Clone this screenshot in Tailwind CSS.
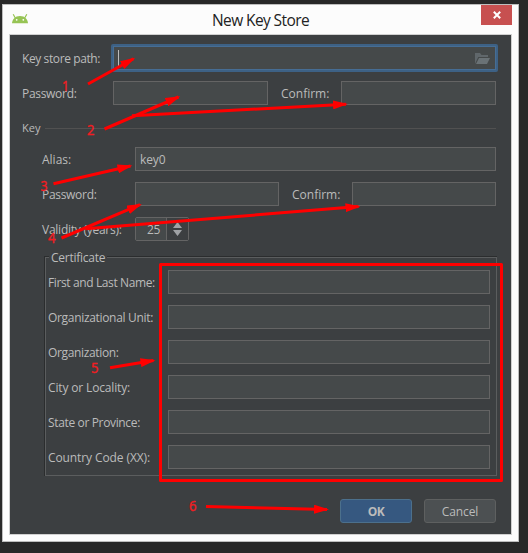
<!DOCTYPE html>
<html lang="en">
<head>
<meta charset="utf-8">
<title>New Key Store</title>
<script src="https://cdn.jsdelivr.net/npm/@tailwindcss/browser@4"></script>
</head>
<body class="h-[553px] w-[528px] overflow-hidden bg-[#282828] pl-[2px] pt-[4px] font-['Open_Sans','Noto_Sans',sans-serif] text-[12px] leading-4 text-[#bbbbbb]">
<div class="relative flex h-[538px] w-[517px] flex-col border border-[#bdbdbd] bg-[#fcfcfc] px-[6px] pb-[6px]">
  <header class="relative flex h-[29px] shrink-0 items-center justify-center text-[15.5px] text-[#222222]">
    <svg class="absolute left-[3px] top-[9px]" width="16" height="10" viewBox="0 0 16 10"><path d="M0 9.200C.3 5.300 3 2 8 2s7.700 3.300 8 7.200z" fill="#97c455"/><path d="M1.200.3 3.300 4M14.800.3 12.700 4" stroke="#97c455" stroke-width="1.200"/><circle cx="4.700" cy="5.800" r=".9" fill="#fff"/><circle cx="11.300" cy="5.800" r=".9" fill="#fff"/></svg>
    <h1 class="whitespace-nowrap tracking-[-0.6px]">New Key Store</h1>
    <button class="absolute right-0 top-0 flex h-5 w-[31px] items-center justify-center bg-[#c75050]"><svg width="8" height="8" viewBox="0 0 8 8"><path d="M.8.8 7.200 7.200M7.200.8.8 7.200" stroke="#fff" stroke-width="2"/></svg></button>
  </header>
  <main class="flex grow flex-col border border-[#d0d0d0] bg-[#3c3f41] pl-3 pr-[15px] pt-[9px]">
    <div class="flex h-7 items-center">
      <label class="w-[89px] whitespace-nowrap pt-0.5 tracking-[-0.4px]">Key store path:</label>
      <div class="-mr-[2px] flex h-7 grow items-center justify-between rounded-[2px] border-2 border-[#3d6185]">
        <div class="flex h-6 grow items-center justify-between border border-[#466d94] bg-[#45494a] pl-1 pr-[5px]">
          <span class="h-4 w-px bg-[#bbbbbb]"></span>
          <svg width="15" height="11" viewBox="0 0 15 11"><path d="M0 11V0h5l1.500 2H13v2H3.200z" fill="#60676b"/><path d="M4 5h11l-3 6H1z" fill="#6a7276"/></svg>
        </div>
      </div>
    </div>
    <div class="mt-[9px] flex h-6 items-center">
      <label class="w-[91px] pt-0.5 tracking-[-0.3px]">Password:</label>
      <div class="h-6 w-[155px] border border-[#646464] bg-[#45494a]"></div>
      <label class="w-[73px] pl-[13px] pt-0.5">Confirm:</label>
      <div class="h-6 w-[155px] border border-[#646464] bg-[#45494a]"></div>
    </div>
    <div class="mt-[15px] flex h-4 items-center text-[11px]"><span class="w-[23px]">Key</span><span class="h-px grow bg-[#515151]"></span></div>
    <div class="mt-[11px] flex h-6 items-center pl-5">
      <label class="w-[93px] pt-0.5">Alias:</label>
      <div class="flex h-6 w-[361px] items-center border border-[#646464] bg-[#45494a] pl-1 pt-0.5 tracking-[-0.1px]">key0</div>
    </div>
    <div class="mt-[11px] flex h-6 items-center pl-5">
      <label class="w-[93px] pt-0.5 tracking-[-0.3px]">Password:</label>
      <div class="h-6 w-[144px] border border-[#646464] bg-[#45494a]"></div>
      <label class="w-[73px] pl-[13px] pt-0.5">Confirm:</label>
      <div class="h-6 w-[144px] border border-[#646464] bg-[#45494a]"></div>
    </div>
    <div class="mt-[11px] flex h-6 items-center pl-5">
      <label class="w-[93px] whitespace-nowrap pt-0.5 tracking-[-0.25px]">Validity (years):</label>
      <div class="flex h-6 w-[54px] rounded-[2px] border border-[#646464] bg-[#45494a]">
        <span class="flex w-[31px] items-center justify-end border-r border-[#646464] bg-[#45494a] pr-[6px] pt-0.5 tracking-[-0.3px]">25</span>
        <span class="flex grow items-center justify-center bg-[#3c3f41]"><svg width="9" height="14" viewBox="0 0 9 14"><path d="M0 6 4.500 0 9 6zM0 8h9l-4.500 6z" fill="#9fa2a5"/></svg></span>
      </div>
    </div>
    <section class="relative ml-[22px] mt-[15px] h-[220px] w-[453px] border border-[#2b2d2e]">
      <div class="h-[219px] w-[452px] border border-[#5b5d5e] pl-[2px] pt-3">
        <h2 class="absolute left-[4px] top-[-7px] w-[58px] bg-[#3c3f41] pl-[2px] tracking-[-0.25px]">Certificate</h2>
        <div class="flex flex-col gap-[11px] whitespace-nowrap">
          <div class="flex h-6 items-center"><label class="w-[120px] pt-0.5 tracking-[-0.38px]">First and Last Name:</label><div class="h-6 w-[322px] border border-[#646464] bg-[#45494a]"></div></div>
          <div class="flex h-6 items-center"><label class="w-[120px] pt-0.5 tracking-[-0.32px]">Organizational Unit:</label><div class="h-6 w-[322px] border border-[#646464] bg-[#45494a]"></div></div>
          <div class="flex h-6 items-center"><label class="w-[120px] pt-0.5 tracking-[-0.35px]">Organization:</label><div class="h-6 w-[322px] border border-[#646464] bg-[#45494a]"></div></div>
          <div class="flex h-6 items-center"><label class="w-[120px] pt-0.5 tracking-[-0.15px]">City or Locality:</label><div class="h-6 w-[322px] border border-[#646464] bg-[#45494a]"></div></div>
          <div class="flex h-6 items-center"><label class="w-[120px] pt-0.5 tracking-[-0.35px]">State or Province:</label><div class="h-6 w-[322px] border border-[#646464] bg-[#45494a]"></div></div>
          <div class="flex h-6 items-center"><label class="w-[120px] pt-0.5 tracking-[-0.1px]">Country Code (XX):</label><div class="h-6 w-[322px] border border-[#646464] bg-[#45494a]"></div></div>
        </div>
      </div>
    </section>
    <footer class="mt-[23px] flex justify-end gap-3">
      <button class="h-6 w-[72px] rounded-[3px] border border-[#4c708c] bg-[#365880] pt-0.5 font-bold tracking-[-0.4px]">OK</button>
      <button class="h-6 w-[72px] rounded-[3px] border border-[#5e6060] bg-[#4c5052] pt-0.5 tracking-[-0.1px]">Cancel</button>
    </footer>
  </main>
</div>
<svg class="pointer-events-none absolute left-0 top-0" width="528" height="553" viewBox="0 0 528 553">
  <defs><marker id="head" viewBox="0 0 15 9" refX="13" refY="4.500" markerWidth="15" markerHeight="9" markerUnits="userSpaceOnUse" orient="auto"><path d="M0 0 15 4.500 0 9z" fill="#f00"/></marker></defs>
  <g stroke="#f00" stroke-width="3" marker-end="url(#head)">
    <path d="M88 84 133.500 58.800"/>
    <path d="M104.500 129 178.500 97"/>
    <path d="M132 115.800 346 104.200"/>
    <path d="M53.500 183.700 130.500 166"/>
    <path d="M61.500 238 140 204.700"/>
    <path d="M86 228.700 358.500 206.600"/>
    <path d="M110 367.700 153.500 360.500"/>
    <path d="M206 506.500 327 509.500"/>
  </g>
  <rect x="160.500" y="264.500" width="341" height="216" fill="none" stroke="#f00" stroke-width="3" stroke-linejoin="round"/>
  <g fill="#f21d22" stroke="#f21d22" stroke-width=".4" font-family="Open Sans, Noto Sans, sans-serif" font-size="14">
    <text x="62" y="91" textLength="7" lengthAdjust="spacingAndGlyphs">1</text>
    <text x="87" y="135" textLength="7.500" lengthAdjust="spacingAndGlyphs">2</text>
    <text x="40.500" y="191" textLength="7" lengthAdjust="spacingAndGlyphs">3</text>
    <text x="48" y="243" textLength="7.500" lengthAdjust="spacingAndGlyphs">4</text>
    <text x="91" y="373" textLength="7.500" lengthAdjust="spacingAndGlyphs">5</text>
    <text x="189" y="511" textLength="7.500" lengthAdjust="spacingAndGlyphs">6</text>
  </g>
</svg>
</body>
</html>
